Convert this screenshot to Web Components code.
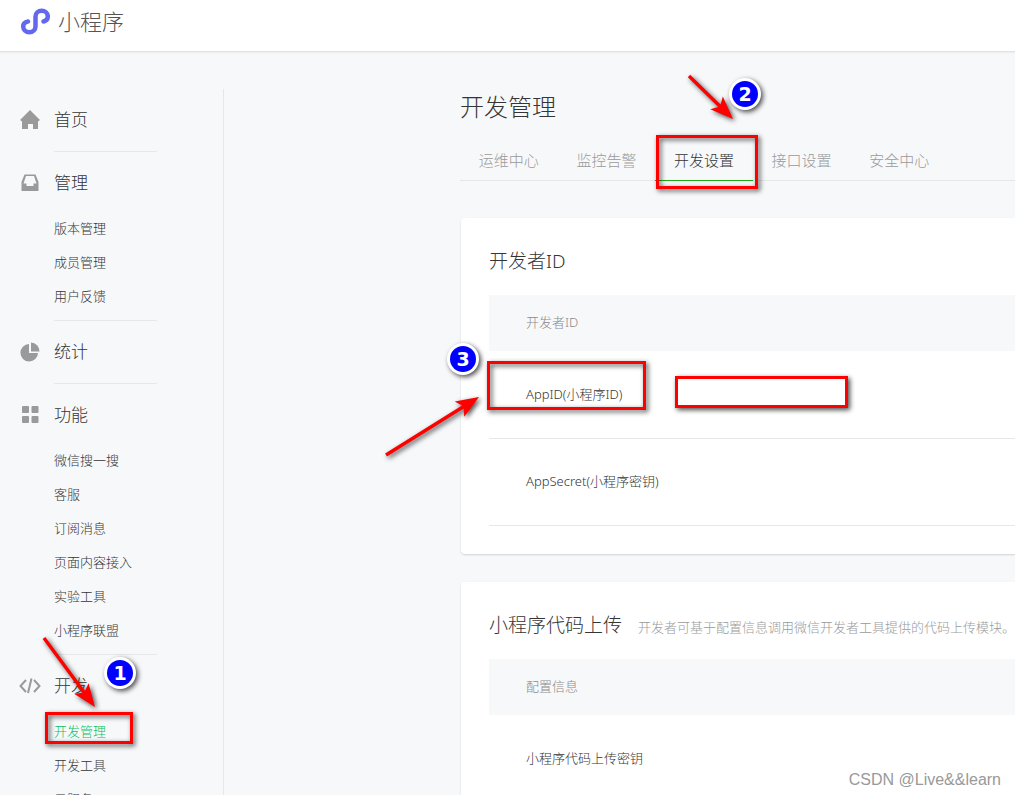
<!DOCTYPE html>
<html lang="zh-CN">
<head>
<meta charset="utf-8">
<title>小程序</title>
<style>
html, body { margin: 0; height: 100%; }
body { overflow: hidden; background: #f7f8fa; color: #353535; font: 300 13px/20px "Noto Sans", "Noto Sans CJK SC", sans-serif; }
</style>
</head>
<body>
<mp-app></mp-app>
<script>
class Base extends HTMLElement {
  constructor() {
    super();
    this.attachShadow({ mode: 'open' }).innerHTML = this.render();
  }
}

const ICONS = {
  home: '<path d="M11 1 21 11 19 12.500V20h-5v-5H9v5H3v-7.500L1 11Z"/>',
  tray: '<path fill-rule="evenodd" d="M5.500 2.500h11L19.500 10v9H2.500v-9ZM7 4 4.500 11.500H7.500V14h7v-2.500h3L15 4Z"/>',
  pie: '<path d="M10 3A8.800 8.800 0 1 0 19 12H10Z"/><path d="M12 1.500A9 9 0 0 1 20.500 10.500H12Z"/>',
  grid: '<rect x="3" y="2" width="7" height="7" rx="1"/><rect x="12.500" y="2" width="7" height="7" rx="1"/><rect x="3" y="12" width="7" height="7" rx="1"/><rect x="12.500" y="12" width="7" height="7" rx="1"/>',
  code: '<path fill="none" stroke="#9a9a9a" stroke-width="2" d="M7 5 1.500 11 7 17M15 5l5.500 6-5.500 6M12.500 3.500 9 18"/>'
};

customElements.define('nav-group', class extends HTMLElement {
  constructor() {
    super();
    this.attachShadow({ mode: 'open' });
  }
  connectedCallback() {
    this.shadowRoot.innerHTML = `
    <style>
      :host { display: block; }
      .head { display: flex; align-items: center; gap: 13px; padding: 14px 0 14px 19px; height: 34px; font-size: 17px; }
      svg { width: 22px; height: 22px; fill: #9a9a9a; display: block; }
      .line { margin: 0 66px 0 54px; border-top: 1px solid #e4e8eb; }
      :host(:first-child) .line { display: none; }
      :host([open]) .head { padding-bottom: 11px; }
      ul { list-style: none; margin: 0; padding: 0 0 7px 54px; }
    </style>
    <div class="line"></div>
    <div class="head"><svg viewBox="0 0 22 22" aria-hidden="true">${ICONS[this.getAttribute('icon')]}</svg>${this.getAttribute('label')}</div>
    ${this.hasAttribute('open') ? '<ul><slot></slot></ul>' : ''}`;
  }
});

customElements.define('nav-link', class extends Base {
  render() {
    return `<style>
      :host { display: block; height: 34px; line-height: 34px; }
      a { color: #353535; text-decoration: none; }
      :host([current]) a { color: #07c160; }
    </style><a href="#"><slot></slot></a>`;
  }
});

customElements.define('mp-header', class extends Base {
  render() {
    return `<style>
      :host { display: flex; align-items: center; gap: 8px; box-sizing: border-box; height: 52px; padding: 0 20px 9px; background: #fff; border-bottom: 1px solid #dfe1e3; box-shadow: 0 1px 2px #0000000d; color: #555; font-size: 22px; }
      svg { display: block; width: 30px; height: 28px; }
    </style>
    <svg viewBox="0 -1 30 28" fill="none" stroke="#6467f0" stroke-width="4.500" stroke-linecap="round" aria-hidden="true">
      <path d="M8 13.500C5 14 3.200 16 3.200 18.600A6.150 5.600 0 0 0 15.500 18.600V8.400A6.150 5.600 0 0 1 27.800 8.400C27.800 11 26 12.800 23.500 13.500"/>
    </svg><span>小程序</span>`;
  }
});

customElements.define('mp-sidebar', class extends Base {
  render() {
    return `<style>:host { display: block; border-right: 1px solid #e4e8eb; }</style>
    <nav>
      <nav-group icon="home" label="首页"></nav-group>
      <nav-group icon="tray" label="管理" open>
        <nav-link>版本管理</nav-link><nav-link>成员管理</nav-link><nav-link>用户反馈</nav-link>
      </nav-group>
      <nav-group icon="pie" label="统计"></nav-group>
      <nav-group icon="grid" label="功能" open>
        <nav-link>微信搜一搜</nav-link><nav-link>客服</nav-link><nav-link>订阅消息</nav-link><nav-link>页面内容接入</nav-link><nav-link>实验工具</nav-link><nav-link>小程序联盟</nav-link>
      </nav-group>
      <nav-group icon="code" label="开发" open>
        <nav-link current>开发管理</nav-link><nav-link>开发工具</nav-link><nav-link>云服务</nav-link>
      </nav-group>
    </nav>`;
  }
});

customElements.define('mp-tabs', class extends Base {
  render() {
    return `<style>
      :host { display: block; border-bottom: 1px solid #e4e8eb; }
      nav { display: grid; grid-template-columns: repeat(5, 1fr); width: 488px; margin-bottom: -1px; }
      a { height: 40px; line-height: 40px; border-bottom: 1px solid transparent; text-align: center; font-size: 15px; color: #9a9a9a; text-decoration: none; }
      a[aria-current] { color: #353535; border-color: #1aad19; }
    </style>
    <nav><a href="#">运维中心</a><a href="#">监控告警</a><a href="#" aria-current="page">开发设置</a><a href="#">接口设置</a><a href="#">安全中心</a></nav>`;
  }
});

customElements.define('mp-card', class extends Base {
  render() {
    return `<style>
      :host { display: block; padding: 28px 0 28px 28px; background: #fff; border-radius: 4px 0 0 4px; box-shadow: 0 1px 2px #00000026; }
      header { display: flex; align-items: baseline; gap: 16px; height: 30px; margin-bottom: 19px; white-space: nowrap; color: #9a9a9a; }
      h2 { margin: 0; font-weight: inherit; font-size: 19px; line-height: 30px; color: #353535; }
    </style>
    <header><h2><slot name="title"></slot></h2><slot name="note"></slot></header><slot></slot>`;
  }
});

customElements.define('info-table', class extends HTMLElement {
  constructor() {
    super();
    this.attachShadow({ mode: 'open' });
  }
  connectedCallback() {
    const rows = this.getAttribute('rows').split('|');
    this.shadowRoot.innerHTML = `<style>
      :host { display: block; }
      table { width: 100%; border-spacing: 0; table-layout: fixed; }
      th, td { box-sizing: border-box; padding: 0 0 2px 37px; text-align: left; font-weight: inherit; }
      th { height: 57px; background: #f7f8fa; border-bottom: 1px solid #fff; color: #8a8a8a; }
      td { height: 87px; border-bottom: 1px solid #e4e8eb; }
    </style>
    <table><thead><tr><th>${this.getAttribute('head')}</th></tr></thead>
    <tbody>${rows.map(r => `<tr><td>${r}</td></tr>`).join('')}</tbody></table>`;
  }
});

customElements.define('mp-main', class extends Base {
  render() {
    return `<style>
      :host { display: flex; flex-direction: column; min-width: 0; }
      h1 { margin: 0 0 15px; font-weight: inherit; font-size: 24px; line-height: 36px; }
      .cards { display: flex; flex-direction: column; gap: 28px; padding: 37px 0 0 1px; }
    </style>
    <h1>开发管理</h1>
    <mp-tabs></mp-tabs>
    <div class="cards">
      <mp-card><span slot="title">开发者ID</span>
        <info-table head="开发者ID" rows="AppID(小程序ID)|AppSecret(小程序密钥)"></info-table></mp-card>
      <mp-card><span slot="title">小程序代码上传</span><span slot="note">开发者可基于配置信息调用微信开发者工具提供的代码上传模块。</span>
        <info-table head="配置信息" rows="小程序代码上传密钥"></info-table></mp-card>
    </div>`;
  }
});

/* Numbered callouts drawn over the page. */
customElements.define('mp-callouts', class extends Base {
  render() {
    const badge = (x, y, n) => `<g filter="url(#s)"><circle cx="${x}" cy="${y}" r="16" fill="#fff"/></g><circle cx="${x}" cy="${y}" r="13" fill="#00f"/><text x="${x}" y="${y + 7}">${n}</text>`;
    const arrow = (x1, y1, x2, y2) => {
      const len = Math.hypot(x2 - x1, y2 - y1), a = Math.atan2(y2 - y1, x2 - x1) * 180 / Math.PI;
      return `<g filter="url(#s)"><path fill="red" transform="translate(${x2} ${y2}) rotate(${a})" d="M0 0-23-9-19-1.700H${-len}V1.700H-19L-23 9Z"/></g>`;
    };
    const box = (x, y, w, h, f = 'none') => `<rect filter="url(#s)" x="${x + 1.5}" y="${y + 1.5}" width="${w - 3}" height="${h - 3}" fill="${f}" stroke="red" stroke-width="3"/>`;
    return `<style>
      :host { position: absolute; top: 0; left: 0; pointer-events: none; }
      svg { display: block; }
      text { fill: #fff; font: bold 19px "DejaVu Sans", sans-serif; text-anchor: middle; }
    </style>
    <svg width="900" height="795">
      <defs><filter id="s" filterUnits="userSpaceOnUse" x="0" y="0" width="900" height="795" color-interpolation-filters="sRGB"><feDropShadow dx="2" dy="2" stdDeviation="2.500" flood-opacity=".7"/></filter></defs>
      ${box(45, 712, 88, 32)}${box(656, 135, 102, 54)}${box(487, 361, 159, 49)}${box(675, 376, 173, 32, '#fff')}
      ${arrow(44, 638, 95, 707)}${arrow(689, 76, 733, 119)}${arrow(386, 455, 479, 397)}
      ${badge(120, 673, 1)}${badge(745, 94, 2)}${badge(463, 359, 3)}
    </svg>`;
  }
});

customElements.define('mp-watermark', class extends Base {
  render() {
    return `<style>:host { position: absolute; right: 14px; bottom: 5px; font: 16px/20px "Liberation Sans", sans-serif; color: #999; text-shadow: 1px 1px 0 #fff; }</style><slot></slot>`;
  }
});

customElements.define('mp-app', class extends Base {
  render() {
    return `<style>
      :host { display: block; position: relative; height: 100vh; overflow: hidden; }
      .page { display: grid; grid-template-columns: 224px 1fr; column-gap: 236px; padding-top: 37px; }
    </style>
    <mp-header></mp-header>
    <div class="page"><mp-sidebar></mp-sidebar><mp-main></mp-main></div>
    <mp-callouts></mp-callouts>
    <mp-watermark>CSDN @Live&amp;&amp;learn</mp-watermark>`;
  }
});
</script>
</body>
</html>
